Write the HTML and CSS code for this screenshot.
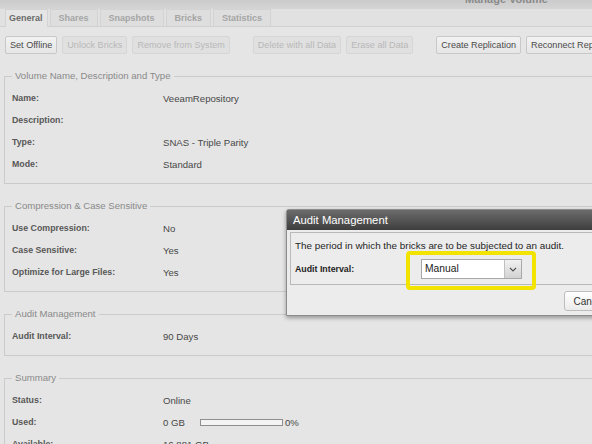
FILE: index.html
```html
<!DOCTYPE html>
<html lang="en">
<head>
  <meta charset="UTF-8" />
  <title>Manage Volume</title>
  <link rel="stylesheet" href="styles.css">
</head>
<body>

<div class="window">
  <!-- Window title -->
  <div class="titlebar"><span>Manage Volume</span></div>

  <!-- Tabs -->
  <div class="tabs">
    <div class="tab active">General</div>
    <div class="tab">Shares</div>
    <div class="tab">Snapshots</div>
    <div class="tab">Bricks</div>
    <div class="tab">Statistics</div>
  </div>

  <!-- Toolbar -->
  <div class="toolbar">
    <div class="group">
      <button class="btn">Set Offline</button>
      <button class="btn" disabled>Unlock Bricks</button>
      <button class="btn" disabled>Remove from System</button>
    </div>
    <div class="group">
      <button class="btn" disabled>Delete with all Data</button>
      <button class="btn" disabled>Erase all Data</button>
    </div>
    <div class="group">
      <button class="btn">Create Replication</button>
      <button class="btn">Reconnect Replication</button>
    </div>
  </div>

  <div class="content">
    <fieldset>
      <legend>Volume Name, Description and Type</legend>
      <div class="rows">
        <div class="row"><span class="label">Name:</span><span class="value">VeeamRepository</span></div>
        <div class="row"><span class="label">Description:</span><span class="value"></span></div>
        <div class="row"><span class="label">Type:</span><span class="value">SNAS - Triple Parity</span></div>
        <div class="row"><span class="label">Mode:</span><span class="value">Standard</span></div>
      </div>
    </fieldset>

    <fieldset>
      <legend>Compression &amp; Case Sensitive</legend>
      <div class="rows">
        <div class="row"><span class="label">Use Compression:</span><span class="value">No</span></div>
        <div class="row"><span class="label">Case Sensitive:</span><span class="value">Yes</span></div>
        <div class="row"><span class="label">Optimize for Large Files:</span><span class="value">Yes</span></div>
      </div>
    </fieldset>

    <fieldset>
      <legend>Audit Management</legend>
      <div class="rows">
        <div class="row"><span class="label">Audit Interval:</span><span class="value">90 Days</span></div>
      </div>
    </fieldset>

    <fieldset>
      <legend>Summary</legend>
      <div class="rows">
        <div class="row"><span class="label">Status:</span><span class="value">Online</span></div>
        <div class="row">
          <span class="label">Used:</span>
          <span class="value usage">
            <span class="used">0 GB</span>
            <span class="bar"><span class="fill"></span></span>
            <span class="pct">0%</span>
          </span>
        </div>
        <div class="row"><span class="label">Available:</span><span class="value">16,881 GB</span></div>
      </div>
    </fieldset>
  </div>

  <!-- Dialog -->
  <div class="dialog">
    <div class="dialog-title">Audit Management</div>
    <div class="dialog-body">
      <div class="panel">
        <p class="hint">The period in which the bricks are to be subjected to an audit.</p>
        <div class="field">
          <span class="label">Audit Interval:</span>
          <div class="select">
            <span class="select-text">Manual</span>
            <span class="select-btn">
              <svg width="8" height="5" viewBox="0 0 8 5"><path d="M1 1 L4 4 L7 1" fill="none" stroke="#555" stroke-width="1.2"/></svg>
            </span>
          </div>
        </div>
      </div>
      <div class="dialog-footer">
        <button class="btn-dialog">Cancel</button>
        <button class="btn-dialog">OK</button>
      </div>
    </div>
  </div>

  <!-- yellow marker round the select -->
  <div class="highlight"></div>
</div>

</body>
</html>
```

FILE: styles.css
```css
body {
    margin: 0;
    font-family: "Liberation Sans", Arial, sans-serif;
    background: #e5e5e5;
}

.window {
    position: relative;
    width: 592px;
    height: 444px;
    overflow: hidden;
    background: #e5e5e5;
}

/* Title */
.titlebar {
    height: 9px;
    overflow: hidden;
    display: flex;
    justify-content: flex-end;
    padding-right: 44px;
    background: linear-gradient(#cbcbcb, #d5d5d5);
}

.titlebar span {
    margin-top: -7px;
    font-size: 11px;
    line-height: 12px;
    font-weight: bold;
    color: #8a8a8a;
}

/* Tabs */
.tabs {
    height: 17px;
    display: flex;
    align-items: flex-end;
    gap: 2px;
    padding-left: 5px;
    background: #e1e1e1;
    border-bottom: 1px solid #d0d0d0;
}

.tab {
    height: 16px;
    line-height: 16px;
    padding: 0 8px;
    border: 1px solid #d3d3d3;
    border-bottom: none;
    background: #dedede;
    font-size: 9px;
    font-weight: bold;
    color: #a5a5a5;
}

.tab.active {
    padding: 0 4px 0 3px;
    background: #e5e5e5;
    color: #6a6a6a;
    margin-bottom: -1px;
    height: 17px;
}

/* Toolbar */
.toolbar {
    display: flex;
    gap: 23px;
    padding: 9px 0 0 5px;
    white-space: nowrap;
}

.group {
    display: flex;
    gap: 5px;
}

.btn {
    height: 18px;
    padding: 0 4px;
    border: 1px solid #c8c8c8;
    border-radius: 2px;
    background: linear-gradient(#f2f2f2, #e6e6e6);
    font-family: "Liberation Sans", Arial, sans-serif;
    font-size: 9.1px;
    color: #4a4a4a;
}

.btn:disabled {
    background: #e0e0e0;
    border-color: #d6d6d6;
    color: #b8b8b8;
}

/* Fieldsets */
.content {
    padding-top: 16px;
}

fieldset {
    margin: 0 -20px 16px 4px;
    padding: 0 0 0 7px;
    border: 1px solid #cbcbcb;
    border-right: none;
}

legend {
    padding: 0 3px;
    margin-left: 0;
    font-size: 9.6px;
    line-height: 12px;
    color: #8a8a8a;
}

.rows {
    padding: 5px 0 8px;
}

.row {
    display: grid;
    grid-template-columns: 151px 1fr;
    align-items: center;
    height: 22px;
}

.label {
    font-size: 8.8px;
    font-weight: bold;
    color: #585858;
}

.value {
    font-size: 9.6px;
    color: #484848;
}

.usage {
    display: flex;
    align-items: center;
}

.used {
    width: 37px;
}

.bar {
    width: 81px;
    height: 5px;
    border: 1px solid #8f8f8f;
    background: #f4f4f4;
}

.pct {
    margin-left: 2px;
}

/* Dialog */
.dialog {
    position: absolute;
    left: 286px;
    top: 209px;
    width: 389px;
    border: 1px solid #8c8c8c;
    border-radius: 3px 3px 0 0;
    background: #ececec;
    box-shadow: 0 2px 4px rgba(0, 0, 0, 0.35);
}

.dialog-title {
    height: 20px;
    line-height: 20px;
    padding-left: 6px;
    background: linear-gradient(#6c6c6c, #3e3e3e);
    color: #fff;
    font-size: 11.3px;
}

.dialog-body {
    padding: 2px 0 4px 3px;
}

.panel {
    border: 1px solid #b9b9b9;
    border-right: none;
    padding: 6px 0 5px 4px;
}

.hint {
    margin: 0;
    line-height: 14px;
    font-size: 9.9px;
    color: #1e1e1e;
}

.field {
    display: grid;
    grid-template-columns: 126px 101px;
    align-items: center;
    margin-top: 6px;
}

.field .label {
    color: #1e1e1e;
}

.select {
    display: flex;
    height: 18px;
    border: 1px solid #a8a8a8;
    background: #fff;
}

.select-text {
    flex: 1;
    padding-left: 3px;
    line-height: 18px;
    font-size: 10.3px;
    color: #222;
}

.select-btn {
    width: 16px;
    display: flex;
    align-items: center;
    justify-content: center;
    border-left: 1px solid #c0c0c0;
    background: linear-gradient(#f2f2f2, #d2d2d2);
}

.dialog-footer {
    display: flex;
    justify-content: flex-end;
    gap: 6px;
    padding: 6px 6px 0 0;
}

.btn-dialog {
    height: 20px;
    min-width: 50px;
    padding: 0 8px;
    border: 1px solid #bdbdbd;
    border-radius: 3px;
    background: linear-gradient(#ffffff, #ebebeb);
    font-family: "Liberation Sans", Arial, sans-serif;
    font-size: 10px;
    color: #333;
}

/* Annotation */
.highlight {
    position: absolute;
    left: 406px;
    top: 251px;
    width: 122px;
    height: 31px;
    border: 4px solid #f3e300;
    border-radius: 4px;
}
```
